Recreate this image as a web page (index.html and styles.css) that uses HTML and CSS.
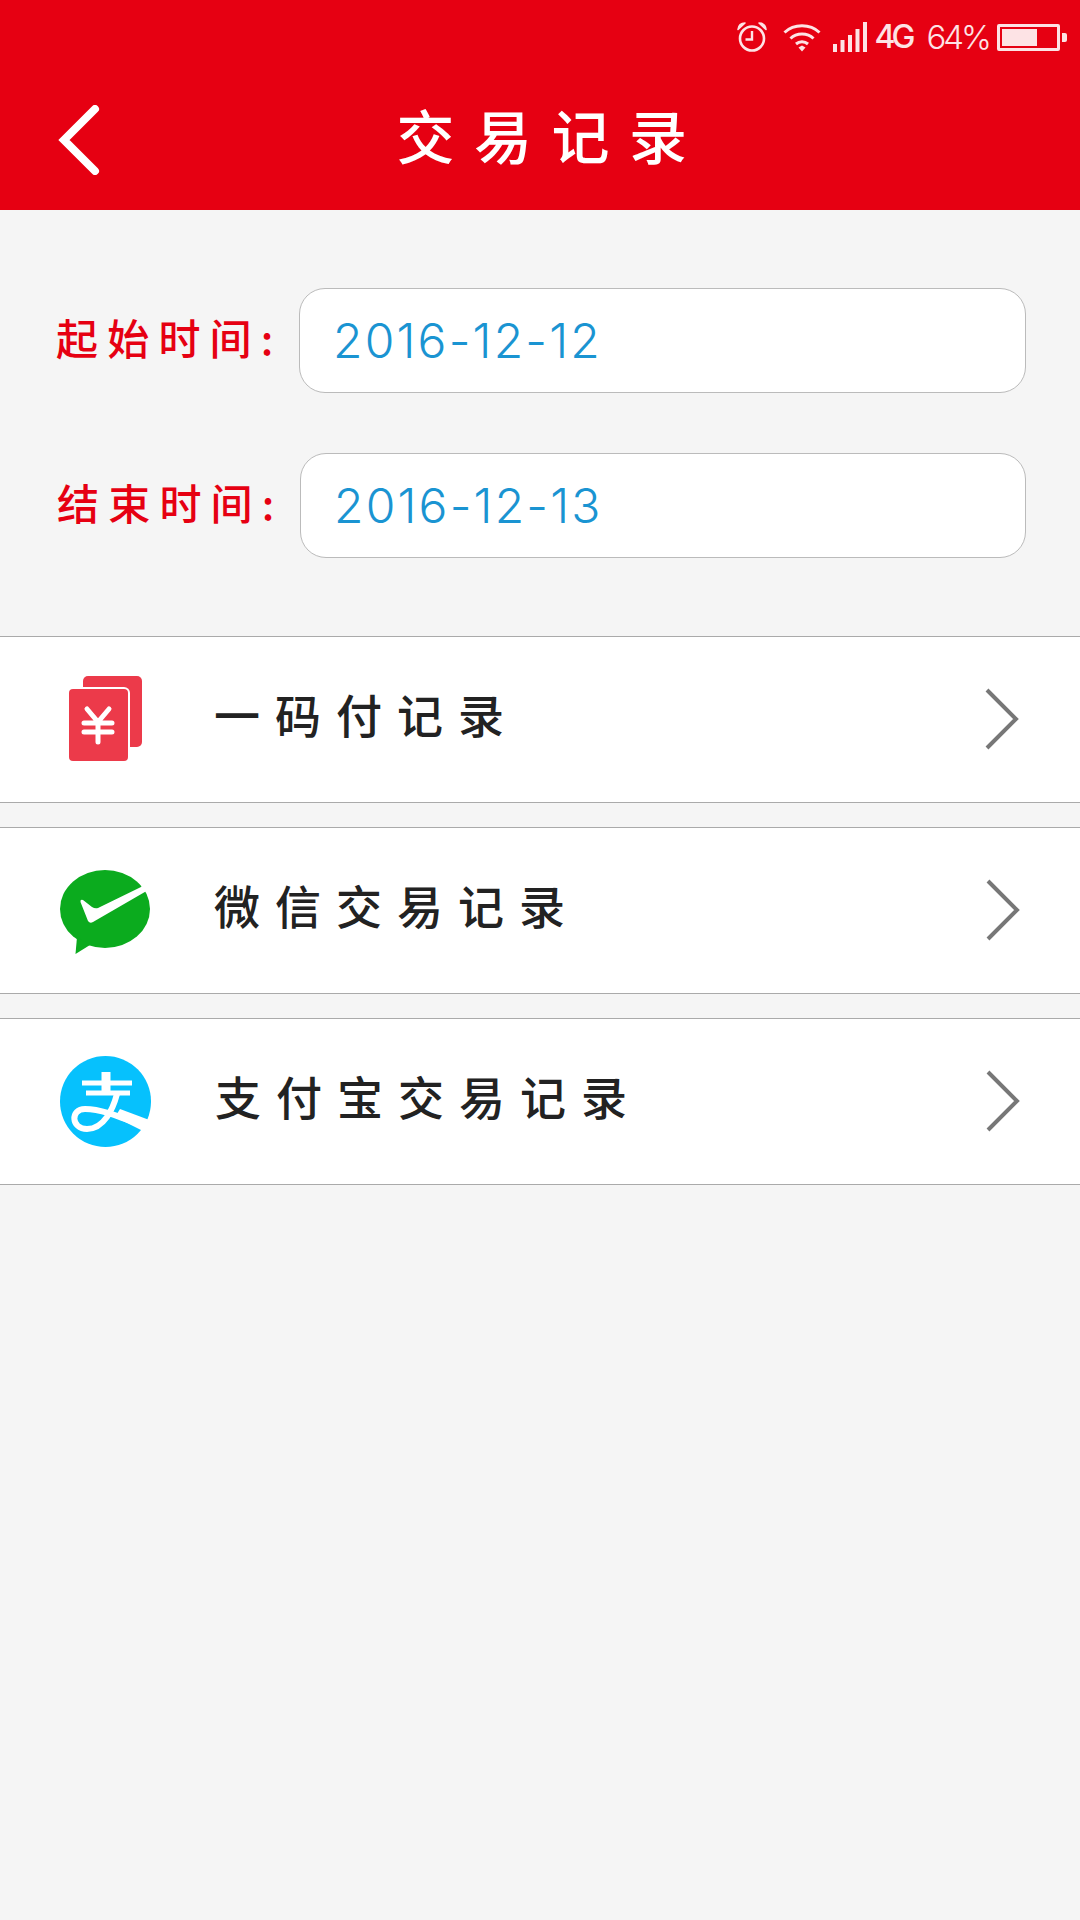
FILE: index.html
```html
<!DOCTYPE html>
<html lang="zh-CN">
<head>
  <meta charset="UTF-8" />
  <meta name="viewport" content="width=device-width, initial-scale=1.0"/>
  <title>交易记录</title>
  <link rel="stylesheet" href="styles.css">
</head>
<body>

  <header class="header">
    <div class="status-bar">
      <svg class="status-icon alarm" width="30" height="30" viewBox="0 0 30 30">
        <circle cx="15" cy="16.5" r="12" fill="none" stroke="#fde3e5" stroke-width="2.6"/>
        <path d="M15 9v8.5H8.5" fill="none" stroke="#fde3e5" stroke-width="2.4"/>
        <path d="M1 7.5C1.5 3.5 4 1 8 1L1 7.5ZM29 7.5C28.500 3.500 26 1 22 1L29 7.5Z" fill="#fde3e5" stroke="#fde3e5" stroke-width="1.6" stroke-linejoin="round"/>
      </svg>
      <svg class="status-icon wifi" width="38" height="30" viewBox="0 0 38 30">
        <path d="M1.500 10.500C11 1.500 27 1.500 36.500 10.500M7.500 16.500C13.500 10.500 24.500 10.500 30.500 16.500M13 22C16.500 19 21.500 19 25 22" fill="none" stroke="#fde3e5" stroke-width="3"/>
        <path d="M15.500 25.500L19 23.500L22.500 25.500L19 29.500Z" fill="#fde3e5"/>
      </svg>
      <svg class="status-icon signal" width="34" height="30" viewBox="0 0 34 30">
        <path d="M0 22h4v8H0zM7.500 18h4v12h-4zM15 13h4v17h-4zM22.500 7h4v23h-4zM30 0h4v30h-4z" fill="#fde3e5"/>
      </svg>
      <span class="net">4G</span>
      <span class="percent">64%</span>
      <div class="battery">
        <div class="battery-body"><div class="battery-fill"></div></div>
        <div class="battery-nub"></div>
      </div>
    </div>

    <div class="nav-bar">
      <svg class="back" width="42" height="70" viewBox="0 0 42 70">
        <path d="M37 4L6 35L37 66" fill="none" stroke="#fff" stroke-width="8" stroke-linecap="round" stroke-linejoin="miter"/>
      </svg>
      <h1 class="title">交易记录</h1>
    </div>
  </header>

  <section class="dates">
    <div class="date-row">
      <span class="date-label">起始时间:</span>
      <div class="date-input">2016-12-12</div>
    </div>
    <div class="date-row date-row-end">
      <span class="date-label">结束时间:</span>
      <div class="date-input">2016-12-13</div>
    </div>
  </section>

  <section class="records">
    <div class="record">
      <svg class="record-icon" width="92" height="92" viewBox="60 674 92 92">
        <rect x="83" y="676" width="59" height="71" rx="5" fill="#ec3a4a"/>
        <rect x="67" y="687" width="63" height="76" rx="6" fill="#fff"/>
        <rect x="69" y="689" width="59" height="72" rx="4" fill="#ec3a4a"/>
        <path d="M87 709L98 722L109 709M84 723H112M84 732H112M98 722V742" fill="none" stroke="#fff" stroke-width="5" stroke-linecap="round"/>
      </svg>
      <span class="record-name">一码付记录</span>
      <svg class="chevron" width="36" height="62" viewBox="0 0 36 62">
        <path d="M3 2L32 31L3 60" fill="none" stroke="#777" stroke-width="4"/>
      </svg>
    </div>

    <div class="record">
      <svg class="record-icon" width="92" height="92" viewBox="60 864 92 92">
        <ellipse cx="105" cy="908" rx="45" ry="39" fill="#0bab1e"/>
        <path d="M77 936L75.500 953L90 944Z" fill="#0bab1e"/>
        <path d="M141 886L98 907Q95 908 92 906L83 899Q80 898 80.500 901L88 920Q90 923 93 921L150 888L146 880Z" fill="#fff"/>
      </svg>
      <span class="record-name">微信交易记录</span>
      <svg class="chevron chevron-shift" width="36" height="62" viewBox="0 0 36 62">
        <path d="M3 2L32 31L3 60" fill="none" stroke="#777" stroke-width="4"/>
      </svg>
    </div>

    <div class="record">
      <svg class="record-icon" width="92" height="92" viewBox="60 1055 92 92">
        <circle cx="105.500" cy="1100.500" r="45.500" fill="#06c1fd"/>
        <path d="M82 1082H132M86 1092H130" fill="none" stroke="#fff" stroke-width="5"/>
        <path d="M106 1071V1092" fill="none" stroke="#fff" stroke-width="9"/>
        <path d="M117 1093C113 1108 104 1128 87 1128C71 1128 70 1108 85 1108C100 1108 115 1114 143 1125" fill="none" stroke="#fff" stroke-width="6"/>
        <path d="M120 1108L152 1120L152 1130L141 1129L115 1116Z" fill="#fff"/>
      </svg>
      <span class="record-name record-name-long">支付宝交易记录</span>
      <svg class="chevron chevron-shift" width="36" height="62" viewBox="0 0 36 62">
        <path d="M3 2L32 31L3 60" fill="none" stroke="#777" stroke-width="4"/>
      </svg>
    </div>
  </section>

</body>
</html>
```

FILE: styles.css
```css
* {
  box-sizing: border-box;
  margin: 0;
  padding: 0;
}

body {
  font-family: "Noto Sans CJK SC", "Noto Sans", sans-serif;
  background-color: #f5f5f5;
  min-height: 100vh;
}

.header {
  background-color: #e60012;
  height: 210px;
  display: flex;
  flex-direction: column;
}

.status-bar {
  height: 70px;
  padding: 22px 13px 0 0;
  display: flex;
  justify-content: flex-end;
  align-items: flex-start;
  color: #fde3e5;
  font-family: "Inter", sans-serif;
}

.alarm {
  margin-right: 16px;
}

.wifi {
  margin-right: 12px;
}

.signal {
  margin-right: 8px;
}

.net {
  font-size: 32px;
  line-height: 30px;
  font-weight: 500;
  letter-spacing: -4px;
  margin-right: 15px;
}

.percent {
  font-size: 33px;
  line-height: 30px;
  font-weight: 300;
  letter-spacing: -3px;
  margin-right: 8px;
}

.battery {
  display: flex;
  align-items: center;
  height: 27px;
  margin-top: 2px;
}

.battery-body {
  width: 63px;
  height: 27px;
  border: 3px solid #fde3e5;
  border-radius: 2px;
  padding: 2px;
}

.battery-fill {
  width: 35px;
  height: 100%;
  background-color: #fde3e5;
}

.battery-nub {
  width: 5px;
  height: 9px;
  margin-left: 2px;
  background-color: #fde3e5;
  border-radius: 0 2px 2px 0;
}

.nav-bar {
  flex: 1;
  display: grid;
  grid-template-columns: 1fr auto 1fr;
  align-items: center;
}

.back {
  margin-left: 58px;
}

.title {
  color: #fff;
  font-size: 58px;
  line-height: 70px;
  font-weight: 500;
  letter-spacing: 19.500px;
  margin-left: 17px;
  margin-right: -6px;
  margin-bottom: 12px;
}

.dates {
  padding: 78px 54px 0 56px;
  display: flex;
  flex-direction: column;
  gap: 60px;
}

.date-row {
  display: flex;
  align-items: center;
  gap: 24px;
}

.date-row-end {
  margin-left: 1px;
}

.date-label {
  color: #e60012;
  font-size: 42px;
  font-weight: 500;
  letter-spacing: 9.200px;
  white-space: nowrap;
  width: 219px;
  margin-bottom: 8px;
}

.date-input {
  flex: 1;
  height: 105px;
  background-color: #fff;
  border: 1px solid #bbb;
  border-radius: 26px;
  padding-left: 33px;
  display: flex;
  align-items: center;
  color: #1a94d2;
  font-family: "Inter", sans-serif;
  font-size: 48px;
  font-weight: 350;
  letter-spacing: 2.200px;
}

.records {
  margin-top: 78px;
  display: flex;
  flex-direction: column;
  gap: 24px;
}

.record {
  height: 167px;
  background-color: #fff;
  border-top: 1px solid #aaa;
  border-bottom: 1px solid #aaa;
  display: flex;
  align-items: center;
  padding: 0 60px 0 60px;
}

.record-icon {
  flex-shrink: 0;
}

.record-name {
  margin-left: 62px;
  margin-bottom: 14px;
  font-size: 46px;
  font-weight: 500;
  letter-spacing: 15px;
  color: #222;
  white-space: nowrap;
}

.record-name-long {
  margin-left: 63px;
}

.chevron {
  margin-left: auto;
  margin-bottom: 2px;
}

.chevron-shift {
  margin-right: -1px;
}
```
